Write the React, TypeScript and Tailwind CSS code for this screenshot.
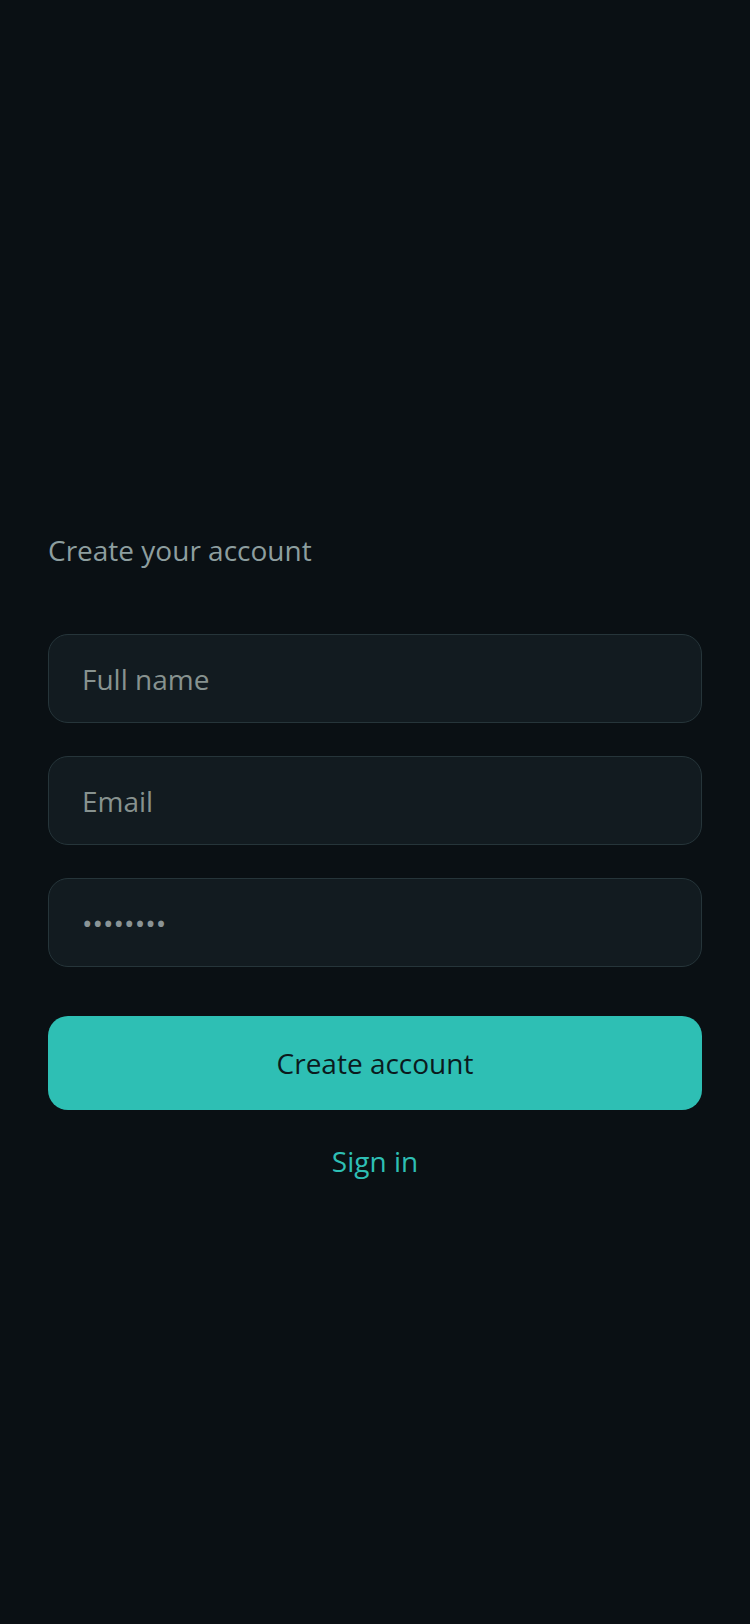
import React from "react";

export default function App() {
  return (
    <div
      className="min-h-[1624px] w-full bg-[#0a1014] px-12 pt-[531px]"
      style={{ fontFamily: '"Open Sans", "Noto Sans", sans-serif' }}
    >
      <h1 className="text-[28px] leading-[38px] font-normal text-[#8d9e9f]">Create your account</h1>
      <form className="mt-[65px] flex flex-col gap-[33px]" onSubmit={(e) => e.preventDefault()}>
        <input
          type="text"
          placeholder="Full name"
          className="h-[89px] w-full rounded-[20px] border-[1.5px] border-[#26353a] bg-[#121b20] px-[33px] text-[28px] text-[#c9d3d4] outline-none placeholder:text-[#87928f]"
        />
        <input
          type="email"
          placeholder="Email"
          className="h-[89px] w-full rounded-[20px] border-[1.5px] border-[#26353a] bg-[#121b20] px-[33px] text-[28px] text-[#c9d3d4] outline-none placeholder:text-[#87928f]"
        />
        <input
          type="password"
          defaultValue="password"
          readOnly
          className="h-[89px] w-full rounded-[20px] border-[1.5px] border-[#26353a] bg-[#121b20] px-[33px] text-[28px] text-[#8a9496] outline-none"
        />
      </form>
      <button
        type="button"
        className="mt-[49px] flex h-[94px] w-full items-center justify-center rounded-[20px] bg-[#2ebfb4] text-[28px] text-[#0b1a1d]"
      >
        Create account
      </button>
      <div className="mt-[32px] text-center text-[28px] leading-[38px] text-[#2ebfb4]">Sign in</div>
    </div>
  );
}
